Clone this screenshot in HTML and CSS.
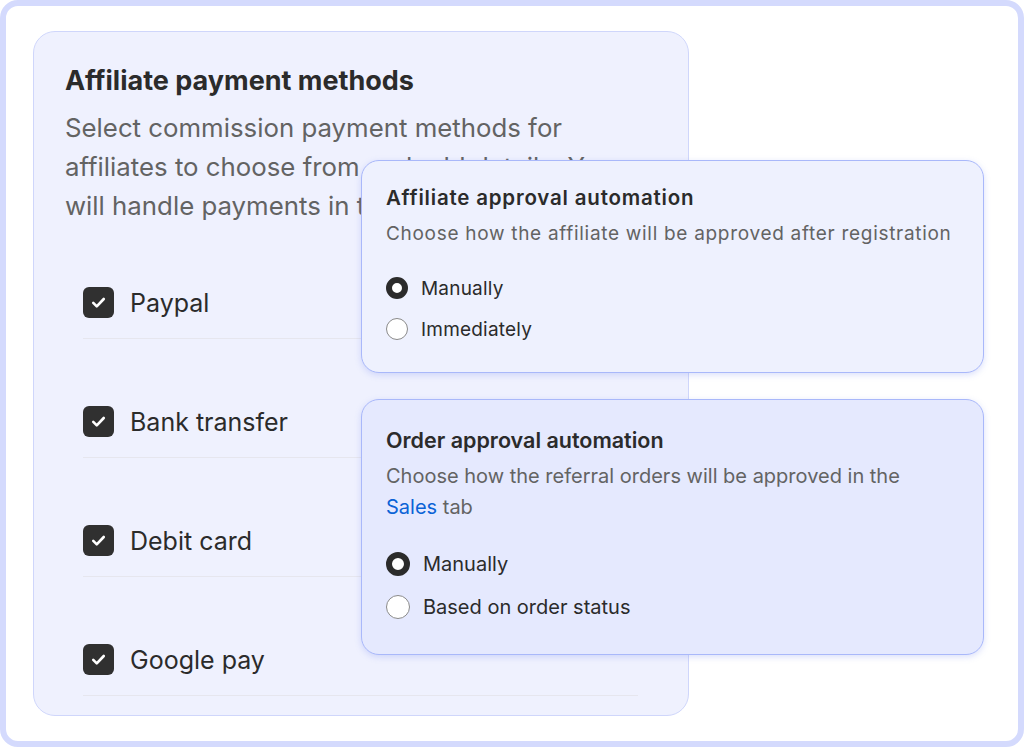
FILE: index.html
```html
<!DOCTYPE html>
<html lang="en">
<head>
<meta charset="utf-8">
<title>Affiliate settings</title>
<link rel="stylesheet" href="styles.css">
</head>
<body>
<div class="frame">
  <section class="methods">
    <h1 class="methods-title">Affiliate payment methods</h1>
    <p class="methods-desc">Select commission payment methods for<br>affiliates to choose from and add details. You<br>will handle payments in their dashboard.</p>
    <ul class="method-list">
      <li class="method-row"><span class="check"><svg viewBox="0 0 24 24" width="21" height="21"><path d="M6 12.5l4 4 8-8.5" fill="none" stroke="#fff" stroke-width="3" stroke-linecap="round" stroke-linejoin="round"/></svg></span><span class="method-label">Paypal</span></li>
      <li class="method-row"><span class="check"><svg viewBox="0 0 24 24" width="21" height="21"><path d="M6 12.5l4 4 8-8.5" fill="none" stroke="#fff" stroke-width="3" stroke-linecap="round" stroke-linejoin="round"/></svg></span><span class="method-label">Bank transfer</span></li>
      <li class="method-row"><span class="check"><svg viewBox="0 0 24 24" width="21" height="21"><path d="M6 12.5l4 4 8-8.5" fill="none" stroke="#fff" stroke-width="3" stroke-linecap="round" stroke-linejoin="round"/></svg></span><span class="method-label">Debit card</span></li>
      <li class="method-row"><span class="check"><svg viewBox="0 0 24 24" width="21" height="21"><path d="M6 12.5l4 4 8-8.5" fill="none" stroke="#fff" stroke-width="3" stroke-linecap="round" stroke-linejoin="round"/></svg></span><span class="method-label">Google pay</span></li>
    </ul>
  </section>

  <section class="popup popup-affiliate">
    <h2 class="popup-title">Affiliate approval automation</h2>
    <p class="popup-desc">Choose how the affiliate will be approved after registration</p>
    <div class="radio-group">
      <div class="radio-row"><span class="radio radio-on"></span><span class="radio-label">Manually</span></div>
      <div class="radio-row"><span class="radio"></span><span class="radio-label">Immediately</span></div>
    </div>
  </section>

  <section class="popup popup-order">
    <h2 class="popup-title">Order approval automation</h2>
    <p class="popup-desc">Choose how the referral orders will be approved in the <span class="link">Sales</span> tab</p>
    <div class="radio-group">
      <div class="radio-row"><span class="radio radio-on"></span><span class="radio-label">Manually</span></div>
      <div class="radio-row"><span class="radio"></span><span class="radio-label">Based on order status</span></div>
    </div>
  </section>
</div>
</body>
</html>
```

FILE: styles.css
```css
* { box-sizing: border-box; }
html, body { margin: 0; padding: 0; background: #ffffff; }
body { font-family: Inter, "Noto Sans", sans-serif; color: #2b2b2b; }

.frame {
  position: relative;
  width: 1024px;
  height: 747px;
  border: 6px solid #d4dafd;
  border-radius: 18px;
  background: #ffffff;
  padding: 25px 0 0 27px;
  overflow: hidden;
}

.methods {
  width: 656px;
  height: 685px;
  background: #eff1fe;
  border: 1px solid #cfd6fb;
  border-radius: 22px;
  padding: 34px 50px 0 31px;
}
.methods-title {
  margin: 0;
  font-size: 27px;
  line-height: 30px;
  font-weight: 700;
  color: #2b2b2b;
}
.methods-desc {
  margin: 12px 0 -5px;
  font-size: 25.8px;
  line-height: 39px;
  color: #636363;
  white-space: nowrap;
}
.method-list {
  list-style: none;
  margin: 0 0 0 18px;
  padding: 0;
}
.method-row {
  display: flex;
  align-items: center;
  gap: 16px;
  padding: 67px 0 20px;
  border-bottom: 1px solid #e6e6ee;
}
.check {
  width: 31px;
  height: 31px;
  border-radius: 6px;
  background: #303030;
  display: flex;
  align-items: center;
  justify-content: center;
  flex: none;
}
.method-label {
  font-size: 25px;
  color: #2b2b2b;
}

.popup {
  position: absolute;
  left: 355px;
  width: 623px;
  border: 1.5px solid #a9b8fa;
  border-radius: 18px;
  box-shadow: 0 2px 6px rgba(110, 130, 240, 0.25);
  padding-left: 24px;
}
.popup-affiliate {
  top: 154px;
  height: 213px;
  background: #eef1fe;
  padding-top: 25px;
}
.popup-order {
  top: 393px;
  height: 256px;
  background: #e5e9fe;
  padding-top: 27px;
}
.popup-title {
  margin: 0;
  font-weight: 600;
  color: #2b2b2b;
}
.popup-affiliate .popup-title { font-size: 20.5px; line-height: 24px; letter-spacing: 0.8px; }
.popup-order .popup-title { font-size: 21.5px; line-height: 26px; }
.popup-desc {
  margin: 12px 0 0;
  color: #636363;
}
.popup-affiliate .popup-desc { font-size: 19px; line-height: 24px; letter-spacing: 0.7px; }
.popup-order .popup-desc { margin-top: 8px; font-size: 20px; line-height: 31px; width: 545px; }
.link { color: #0b63d6; }

.radio-group { display: flex; flex-direction: column; }
.popup-affiliate .radio-group { margin-top: 27px; gap: 11px; }
.popup-order .radio-group { margin-top: 26px; gap: 13px; }
.radio-row {
  display: flex;
  align-items: center;
  height: 30px;
  gap: 13px;
}
.radio {
  width: 22px;
  height: 22px;
  border-radius: 50%;
  background: #ffffff;
  border: 1px solid #8a8a8a;
  flex: none;
}
.popup-order .radio { width: 24px; height: 24px; }
.radio-on { border: 6px solid #2b2b2b; }
.radio-label { font-size: 19px; letter-spacing: 0.2px; color: #2b2b2b; }
.popup-order .radio-label { font-size: 20px; letter-spacing: 0; }
```
